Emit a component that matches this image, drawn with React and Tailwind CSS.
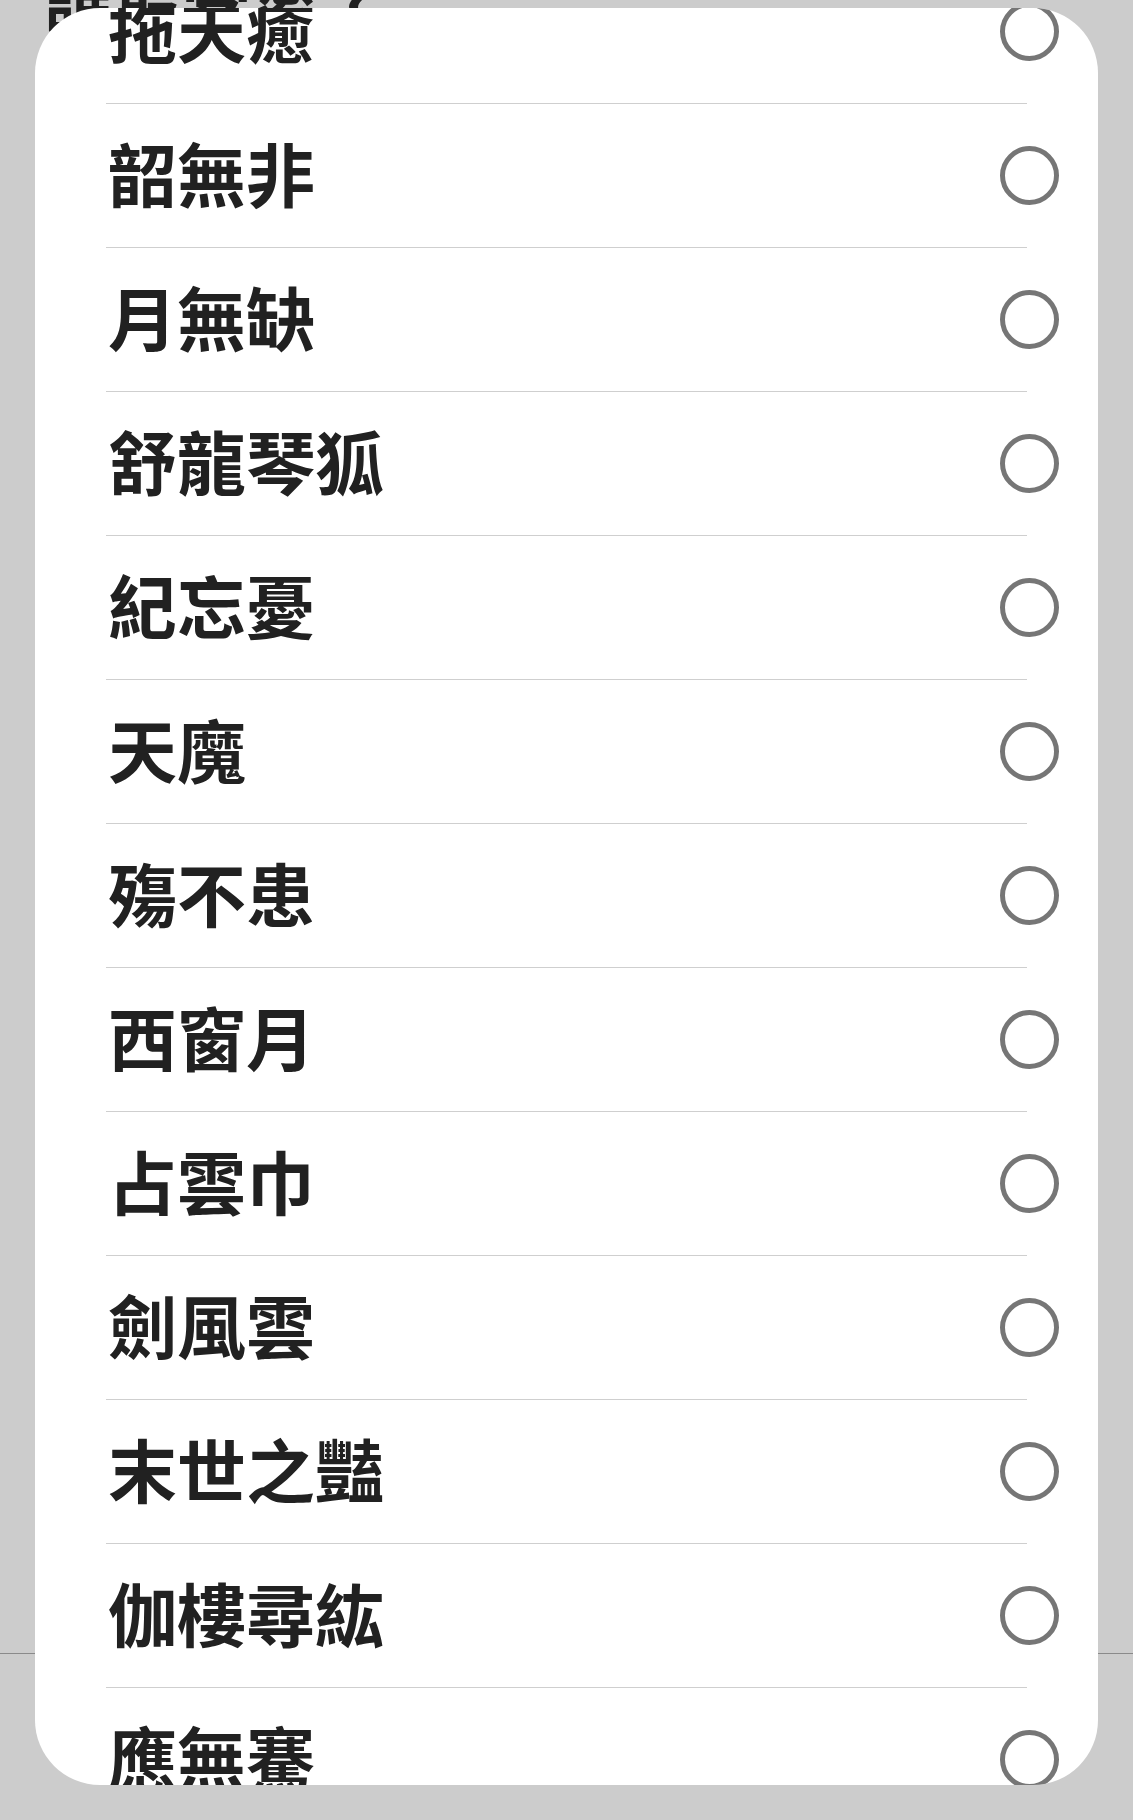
const names = [
  '拖天癒',
  '韶無非',
  '月無缺',
  '舒龍琴狐',
  '紀忘憂',
  '天魔',
  '殤不患',
  '西窗月',
  '占雲巾',
  '劍風雲',
  '末世之豔',
  '伽樓尋紘',
  '應無騫',
];

const cjk = { fontFamily: '"Noto Sans CJK TC", "Noto Sans", sans-serif' };

export default function App() {
  return (
    <div className="relative h-[1820px] w-full overflow-hidden bg-[#cccccc]" style={cjk}>
      {/* page behind the dialog */}
      <div className="flex h-full flex-col">
        <h1 className="-mt-[38px] pl-[44px] text-[69px] font-bold leading-none text-[#212121]">誰最受愛？</h1>
        <div className="mt-[1622px] border-b border-[#8a8a8a]" />
      </div>

      {/* dialog */}
      <div className="absolute left-[35px] top-[8px] h-[1777px] w-[1063px] overflow-hidden rounded-[65px] bg-white">
        <ul className="-mt-[48px]">
          {names.map((name) => (
            <li
              key={name}
              className="mx-[71px] flex h-[144px] items-center justify-between border-b border-[#cfcfcf]"
            >
              <span className="pb-[6px] pl-[2px] text-[69px] font-bold leading-none text-[#212121]">{name}</span>
              <span className="-mr-[32px] h-[59px] w-[59px] rounded-full border-[5px] border-[#767676]" />
            </li>
          ))}
        </ul>
      </div>
    </div>
  );
}
